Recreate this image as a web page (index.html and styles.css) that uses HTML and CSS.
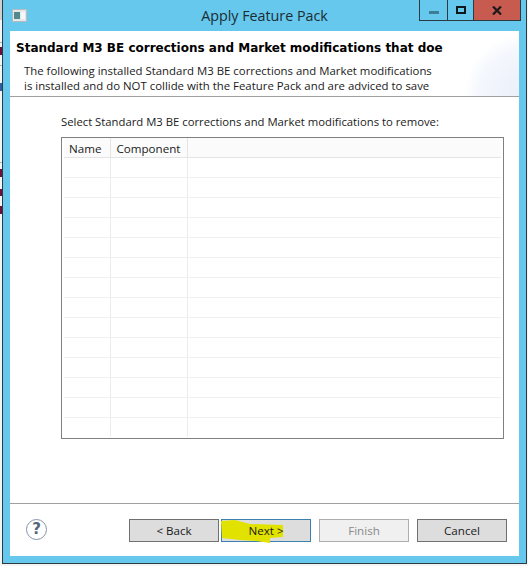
FILE: index.html

```html
<!DOCTYPE html>
<html lang="en">
<head>
  <meta charset="UTF-8">
  <title>Apply Feature Pack</title>
  <link rel="stylesheet" href="styles.css">
</head>
<body>
  <div class="desktop">
    <div class="window">
      <div class="titlebar">
        <svg class="app-icon" width="15" height="13" viewBox="0 0 15 13">
          <rect x="0.5" y="0.5" width="14" height="12" fill="#e4e8ea" stroke="#b4bcc0"/>
          <rect x="2" y="3" width="6" height="7" fill="#4f8a8c"/>
          <rect x="9" y="3" width="4" height="7" fill="#f6f8f8"/>
        </svg>
        <div class="title">Apply Feature Pack</div>
        <div class="controls">
          <div class="ctl ctl-min"><span class="min-bar"></span></div>
          <div class="ctl ctl-max"><span class="max-box"></span></div>
          <div class="ctl ctl-close">
            <svg width="10" height="9" viewBox="0 0 10 9"><path d="M1 0.5 L9 8.5 M9 0.5 L1 8.5" stroke="#1a1a1a" stroke-width="2.2"/></svg>
          </div>
        </div>
      </div>

      <div class="content">
        <div class="banner">
          <h1>Standard M3 BE corrections and Market modifications that doe</h1>
          <p>The following installed Standard M3 BE corrections and Market modifications<br>is installed and do NOT collide with the Feature Pack and are adviced to save</p>
        </div>

        <div class="body">
          <div class="label">Select Standard M3 BE corrections and Market modifications to remove:</div>
          <div class="table-box">
            <table class="grid">
              <thead>
                <tr><th class="col-name">Name</th><th class="col-comp">Component</th><th></th></tr>
              </thead>
              <tbody>
                <tr><td></td><td></td><td></td></tr>
                <tr><td></td><td></td><td></td></tr>
                <tr><td></td><td></td><td></td></tr>
                <tr><td></td><td></td><td></td></tr>
                <tr><td></td><td></td><td></td></tr>
                <tr><td></td><td></td><td></td></tr>
                <tr><td></td><td></td><td></td></tr>
                <tr><td></td><td></td><td></td></tr>
                <tr><td></td><td></td><td></td></tr>
                <tr><td></td><td></td><td></td></tr>
                <tr><td></td><td></td><td></td></tr>
                <tr><td></td><td></td><td></td></tr>
                <tr><td></td><td></td><td></td></tr>
                <tr class="last"><td></td><td></td><td></td></tr>
              </tbody>
            </table>
          </div>
        </div>

        <div class="footer">
          <div class="help">?</div>
          <div class="buttons">
            <button class="btn">&lt; Back</button>
            <button class="btn btn-next">
              <svg class="marker" width="66" height="26" viewBox="0 0 66 26">
                <path d="M2 3 L16 2 L31 6 L64 7 L64 19 L51 20 L51 25 L37 23 L21 22 L3 20 Z" fill="#e2e200"/>
              </svg>
              <span class="next-text">Next &gt;</span>
            </button>
            <button class="btn btn-off">Finish</button>
            <button class="btn">Cancel</button>
          </div>
        </div>
      </div>
    </div>
  </div>
</body>
</html>
```

FILE: styles.css

```css
:root {
  --frame: #65c8ec;
  --edge: #2c3a42;
  --rule: #a0a0a0;
}

html, body {
  margin: 0;
  height: 100%;
}

body {
  font-family: "Open Sans", "Noto Sans", sans-serif;
  font-size: 11.4px;
  color: #1a1a1a;
  background: #f4f4f4;
  overflow: hidden;
}

/* bits of the windows behind, only a sliver shows on the left */
.desktop {
  width: 528px;
  height: 566px;
  padding-left: 2px;
  box-sizing: border-box;
  background:
    linear-gradient(#6e0f3c, #6e0f3c) 0 47px / 2px 8px no-repeat,
    linear-gradient(#2f5f9e, #2f5f9e) 0 83px / 2px 8px no-repeat,
    linear-gradient(#6e0f3c, #6e0f3c) 0 169px / 2px 8px no-repeat,
    linear-gradient(#6e0f3c, #6e0f3c) 0 189px / 2px 7px no-repeat,
    linear-gradient(#6e0f3c, #6e0f3c) 0 206px / 2px 8px no-repeat,
    linear-gradient(#b0b0b0, #b0b0b0) 0 42px / 2px 1px no-repeat,
    linear-gradient(#b0b0b0, #b0b0b0) 0 65px / 2px 1px no-repeat,
    linear-gradient(#b0b0b0, #b0b0b0) 0 162px / 2px 1px no-repeat,
    linear-gradient(#d0d0d0, #d0d0d0) 0 0 / 2px 20px no-repeat;
}

.window {
  width: 525px;
  height: 564px;
  box-sizing: border-box;
  border: 1px solid var(--edge);
  border-top: 0;
  background: var(--frame);
  display: flex;
  flex-direction: column;
}

.titlebar {
  height: 31px;
  display: flex;
  position: relative;
  flex: none;
}

.app-icon {
  margin: 9px 0 0 9px;
}

.title {
  position: absolute;
  left: 0;
  right: 0;
  top: 5px;
  text-align: center;
  font-size: 14.3px;
  line-height: 21px;
  color: #1c2c34;
}

.controls {
  margin-left: auto;
  display: flex;
  height: 21px;
  position: relative;
  margin-right: 5px;
  border: 1px solid var(--edge);
  border-top: 0;
  box-sizing: border-box;
}

.ctl {
  display: flex;
  align-items: center;
  justify-content: center;
  height: 20px;
}

.ctl-min {
  width: 27px;
  border-right: 1px solid var(--edge);
}

.min-bar {
  width: 10px;
  height: 3px;
  margin-top: 5px;
  background: #3f7d96;
}

.ctl-max {
  width: 25px;
  border-right: 1px solid var(--edge);
}

.max-box {
  width: 6px;
  height: 4px;
  border: 2px solid #10181c;
  margin-top: -1px;
}

.ctl-close {
  width: 46px;
  background: #c75b50;
}

.content {
  margin: 0 7px 7px 7px;
  flex: 1;
  background: #fff;
  display: flex;
  flex-direction: column;
}

.banner {
  height: 66px;
  flex: none;
  box-sizing: border-box;
  border-bottom: 1px solid var(--rule);
  padding: 6px 0 0 6px;
  background:
    radial-gradient(circle at 108% 100%, #e9effa 0, #eef2fb 22px, rgba(240,244,252,0.7) 48px, #fff 62px) no-repeat right bottom / 90px 66px,
    #fff;
}

.banner h1 {
  margin: 0;
  font-family: "DejaVu Sans", sans-serif;
  font-size: 12px;
  line-height: 22px;
  font-weight: 700;
  color: #000;
  white-space: nowrap;
}

.banner p {
  margin: 4px 0 0 8px;
  font-size: 11.4px;
  line-height: 15px;
  white-space: nowrap;
}

.body {
  flex: 1;
  padding: 17px 15px 0 51px;
  box-sizing: border-box;
  border-bottom: 1px solid var(--rule);
}

.label {
  font-size: 11.3px;
  line-height: 16px;
  white-space: nowrap;
}

.table-box {
  margin-top: 7px;
  width: 443px;
  height: 302px;
  box-sizing: border-box;
  border: 1px solid #808080;
  padding: 0 2px 0 2px;
  overflow: hidden;
}

.grid {
  width: 100%;
  table-layout: fixed;
  border-collapse: collapse;
}

.grid th {
  height: 19px;
  padding: 2px 0 0 5px;
  text-align: left;
  font-weight: 400;
  font-size: 11.6px;
  background: #fbfbfb;
  border-bottom: 1px solid #e4e4e4;
  border-right: 1px solid #e4e4e4;
  box-sizing: border-box;
}

.grid th:last-child {
  border-right: 0;
}

.col-name {
  width: 46px;
}

.grid .col-comp {
  width: 77px;
  padding-left: 6px;
}

.grid td {
  height: 20px;
  padding: 0;
  box-sizing: border-box;
  border-bottom: 1px solid #f0f0f0;
  border-right: 1px solid #ececec;
}

.grid td:last-child {
  border-right: 0;
}

.grid .last td {
  border-bottom: 0;
}

.footer {
  height: 52px;
  flex: none;
  display: flex;
  align-items: flex-start;
  padding: 15px 0 0 16px;
  box-sizing: border-box;
}

.help {
  width: 21px;
  height: 21px;
  box-sizing: border-box;
  border: 1.5px solid #8494a8;
  border-radius: 50%;
  color: #54657c;
  font-family: "DejaVu Sans", sans-serif;
  font-weight: 700;
  font-size: 15px;
  line-height: 18px;
  text-align: center;
}

.buttons {
  margin-left: 82px;
  display: flex;
  gap: 2px;
}

.btn {
  position: relative;
  width: 90px;
  height: 23px;
  box-sizing: border-box;
  padding: 0;
  border: 1px solid #707070;
  background: #dddddd;
  font-family: inherit;
  font-size: 11.6px;
  color: #1a1a1a;
}

.btn-next {
  border-color: #3c7fb1;
  margin-right: 6px;
}

.btn-off {
  background: #f0f0f0;
  border-color: #adadad;
  color: #8a8a8a;
  margin-right: 6px;
}

.marker {
  position: absolute;
  left: -3px;
  top: -2px;
}

.next-text {
  position: relative;
}
```
